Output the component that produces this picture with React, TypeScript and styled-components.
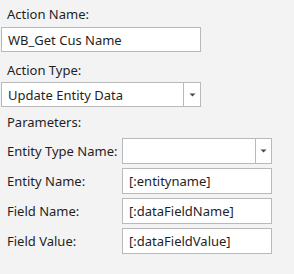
import React from "react";
import styled, { createGlobalStyle } from "styled-components";

const Global = createGlobalStyle`
  html, body { margin: 0; padding: 0; background: #f3f3f3; }
  * { box-sizing: border-box; }
`;

const Page = styled.div`
  width: 294px;
  height: 274px;
  background: #f3f3f3;
  padding-left: 1px;
  font-family: "Segoe UI", "Noto Sans", "Open Sans", sans-serif;
  font-size: 13px;
  color: #1f1f1f;
  display: flex;
  flex-direction: column;
`;

const Label = styled.div<{ $top: number; $bottom: number }>`
  padding: ${(p) => p.$top}px 6px ${(p) => p.$bottom}px 6px;
  line-height: 16px;
  white-space: nowrap;
`;

const Box = styled.div<{ $width: number; $height: number }>`
  width: ${(p) => p.$width}px;
  height: ${(p) => p.$height}px;
  background: #fff;
  border: 1px solid #b9b9b9;
  display: flex;
  align-items: stretch;
`;

const BoxText = styled.div`
  flex: 1;
  display: flex;
  align-items: center;
  padding-left: 6px;
  line-height: 16px;
  white-space: nowrap;
  overflow: hidden;
`;

const DropButton = styled.div<{ $width: number }>`
  width: ${(p) => p.$width}px;
  border-left: 1px solid #b9b9b9;
  display: flex;
  align-items: center;
  justify-content: center;
`;

const Grid = styled.div`
  display: grid;
  grid-template-columns: 121px 150px;
  grid-auto-rows: 26px;
  row-gap: 4px;
`;

const RowLabel = styled.div`
  display: flex;
  align-items: center;
  padding-left: 6px;
  white-space: nowrap;
`;

const Arrow = () => (
  <svg width="7" height="4" viewBox="0 0 7 4">
    <path d="M0.5 0.5 H6.5 L3.5 3.5 Z" fill="#4a4a4a" />
  </svg>
);

type BoxProps = { width: number; height?: number; value: string };

const TextBox = ({ width, height = 26, value }: BoxProps) => (
  <Box $width={width} $height={height}>
    <BoxText>{value}</BoxText>
  </Box>
);

const Select = ({
  width,
  height = 26,
  value,
  button,
}: BoxProps & { button: number }) => (
  <Box $width={width} $height={height}>
    <BoxText>{value}</BoxText>
    <DropButton $width={button}>
      <Arrow />
    </DropButton>
  </Box>
);

export default function App() {
  return (
    <Page>
      <Global />
      <Label $top={6} $bottom={5}>Action Name:</Label>
      <TextBox width={200} height={25} value="WB_Get Cus Name" />
      <Label $top={10} $bottom={4}>Action Type:</Label>
      <Select width={200} height={25} button={17} value="Update Entity Data" />
      <Label $top={7} $bottom={8}>Parameters:</Label>
      <Grid>
        <RowLabel>Entity Type Name:</RowLabel>
        <Select width={150} button={16} value="" />
        <RowLabel>Entity Name:</RowLabel>
        <TextBox width={150} value="[:entityname]" />
        <RowLabel>Field Name:</RowLabel>
        <TextBox width={150} value="[:dataFieldName]" />
        <RowLabel>Field Value:</RowLabel>
        <TextBox width={150} value="[:dataFieldValue]" />
      </Grid>
    </Page>
  );
}
